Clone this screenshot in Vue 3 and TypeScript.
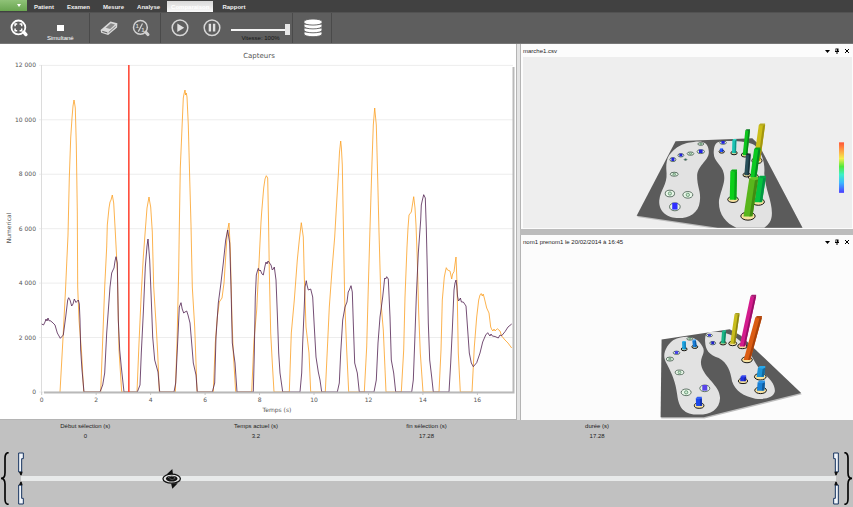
<script setup lang="ts">
import { computed, ref } from 'vue'

interface Bar {
  top: [number, number]
  base: [number, number]
  width: number
  color: string
  side: string
  cap: string
}
interface Marker {
  x: number
  y: number
  rx: number
  ry: number
  fill?: string
}
interface Scene {
  title: string
  tone: string
  viewBox: string
  mat: string
  feet: string[]
  markers: Marker[]
  bars: Bar[]
  legend: boolean
}

const bar = (tx: number, ty: number, bx: number, by: number, width: number, color: string, side: string, cap: string): Bar =>
  ({ top: [tx, ty], base: [bx, by], width, color, side, cap })

const body = (b: Bar) => {
  const w = b.width / 2
  return `${b.top[0] - w},${b.top[1]} ${b.top[0] + w},${b.top[1]} ${b.base[0] + w},${b.base[1]} ${b.base[0] - w},${b.base[1]}`
}
const shade = (b: Bar) => {
  const w = b.width / 2
  const inner = w / 3
  return `${b.top[0] + inner},${b.top[1]} ${b.top[0] + w},${b.top[1]} ${b.base[0] + w},${b.base[1] - 2} ${b.base[0] + inner},${b.base[1]}`
}
const lid = (b: Bar) => {
  const w = b.width / 2
  const h = b.width / 4
  const [x, y] = b.top
  return `${x - w},${y} ${x - w / 2},${y - h} ${x + w},${y - h} ${x + w},${y} ${x + w / 3},${y + h / 2}`
}

const scenes: Scene[] = [
  {
    title: 'marche1.csv',
    tone: 'grey',
    viewBox: '-324 -159 990 513',
    mat: '135,94 366,85 384,102 517,354 262,354 18,318',
    feet: [
      'M190 96C215 92 233 97 235 123C238 150 204 163 200 195C199 230 213 245 208 275C205 310 175 325 145 325C110 325 84 305 86 272C90 238 110 225 108 190C105 150 110 135 140 112C160 100 175 97 190 96Z',
      'M262 97C275 91 350 90 372 105C395 125 405 160 402 190C405 240 425 270 425 310C425 335 415 345 402 354H318C285 340 262 310 266 270C275 230 286 215 280 190C275 165 250 155 250 130C250 115 252 103 262 97Z',
    ],
    markers: [
      { x: 211, y: 102, rx: 9, ry: 4 },
      { x: 180, y: 131, rx: 10, ry: 5 },
      { x: 165, y: 149, rx: 4, ry: 2, fill: '#276b68' },
      { x: 127, y: 149, rx: 9, ry: 6, fill: '#2222dd' },
      { x: 151, y: 136, rx: 9, ry: 5, fill: '#2222dd' },
      { x: 211, y: 125, rx: 11, ry: 6, fill: '#2222dd' },
      { x: 131, y: 193, rx: 12, ry: 6 },
      { x: 118, y: 251, rx: 14, ry: 10 },
      { x: 172, y: 255, rx: 15, ry: 10 },
      { x: 133, y: 291, rx: 16, ry: 12, fill: '#2f2fff' },
      { x: 278, y: 98, rx: 10, ry: 5, fill: '#2222dd' },
    ],
    bars: [
      bar(273, 117, 274, 126, 10, '#1f4cff', '#1433b5', '#3d6cff'),
      bar(312, 90, 311, 130, 12, '#1cc4b4', '#129486', '#35dcca'),
      bar(352, 61, 344, 136, 14, '#0dc51d', '#08831a', '#0a7d20'),
      bar(395, 45, 380, 153, 19, '#cbbd18', '#a2950f', '#b7ab22'),
      bar(381, 117, 369, 202, 19, '#0cc922', '#068b21', '#09a21d'),
      bar(354, 134, 349, 196, 14, '#29505a', '#17323a', '#1c2e33'),
      bar(310, 184, 308, 270, 20, '#0bcf1b', '#0aa01a', '#0aae18'),
      bar(395, 203, 384, 277, 23, '#05c33e', '#029444', '#03a843'),
      bar(370, 208, 353, 320, 27, '#58b61c', '#418c12', '#67c62a'),
    ],
    legend: true,
  },
  {
    title: 'nom1 prenom1 le 20/02/2014 à 16:45',
    tone: 'white',
    viewBox: '-354 -96 990 504',
    mat: '63,174 268,143 301,162 483,335 190,408 60,408',
    feet: [
      'M120 168C150 160 175 172 186 195C198 215 178 225 182 250C190 290 238 310 239 350C238 385 210 400 175 400C130 400 115 380 110 340C105 300 95 280 80 250C68 230 68 215 80 195C92 177 105 171 120 168Z',
      'M205 152C235 148 280 152 310 190C335 220 340 240 360 265C385 290 405 305 404 330C400 350 375 355 345 352C310 345 285 330 275 300C270 270 262 245 235 230C205 220 195 205 194 180C193 165 196 155 205 152Z',
    ],
    markers: [
      { x: 148, y: 172, rx: 9, ry: 4 },
      { x: 88, y: 233, rx: 11, ry: 6 },
      { x: 117, y: 273, rx: 13, ry: 7 },
      { x: 137, y: 333, rx: 15, ry: 10 },
      { x: 193, y: 321, rx: 15, ry: 10, fill: '#5a45e8' },
      { x: 108, y: 214, rx: 10, ry: 5, fill: '#4540e8' },
      { x: 207, y: 162, rx: 9, ry: 4, fill: '#3838dc' },
      { x: 217, y: 185, rx: 9, ry: 5, fill: '#2020c8' },
    ],
    bars: [
      bar(130, 181, 131, 204, 11, '#1aa3e0', '#1277ad', '#2cb4ee'),
      bar(161, 177, 163, 197, 11, '#177cd6', '#105aa0', '#2a90e8'),
      bar(251, 149, 248, 186, 12, '#18b586', '#0f8562', '#22c898'),
      bar(290, 98, 277, 187, 15, '#c8bd1d', '#8c8413', '#a89f1c'),
      bar(339, 44, 306, 195, 17, '#d31b8c', '#980f66', '#a51c72'),
      bar(355, 108, 320, 236, 20, '#db5c12', '#a8410a', '#b54a10'),
      bar(364, 259, 360, 287, 22, '#1c93d6', '#136a9e', '#2ba7e8'),
      bar(363, 303, 361, 328, 22, '#197fd4', '#115a9b', '#2b93e6'),
      bar(309, 286, 308, 300, 17, '#2030e0', '#1520a8', '#3748ee'),
      bar(175, 351, 176, 374, 18, '#1d48e8', '#1432ad', '#2f5cf5'),
    ],
    legend: false,
  },
]

const rightFoot = '60,392 63,338 65.5,290 68,235 69.3,178 70.7,138 72,118 73,106 74,100 74.7,104 75.3,108 76.3,145 77.3,212 77.7,287 79,320 81.6,353 83.7,392 ' +
  '100.7,392 102.7,340 104.7,287 106.7,247 107.3,225 109,208 110,202 111,200 112.3,195 113.7,203 115.3,232 117.3,270 119,350 121.7,392 ' +
  '137,392 139,343 141.3,293 143.3,257 145.7,225 147,208 149,197 149.6,201 150.7,207 152.3,232 153.7,287 156,323 157.7,353 159.3,392 ' +
  '175.3,392 177,343 178.7,270 179.3,228 180.3,168 182,128 183.3,98 184,94 185,90 185.6,95 186.3,93 187,97 188.3,125 189.7,178 191,225 192.3,287 194.7,327 196,363 197,392 ' +
  '213.3,392 215.3,343 217.3,317 219.3,302 222,298 224,283 225.7,257 227.3,232 229,223 230.3,250 232,320 233.3,353 235.7,392 ' +
  '251.7,392 254,340 256.7,310 259,263 261,222 261.7,212 263.7,188 265,179 266.3,175.7 267.7,178 268.6,225 269.3,270 270.7,333 272.3,363 274,392 ' +
  '289.3,392 291.3,333 294.3,300 297.3,260 299.3,240 301.3,222.7 303.3,237 304.3,277 306,327 309,353 310.7,392 ' +
  '325.3,392 327.3,350 329.3,307 332,270 334.7,237 336.7,202 338.3,175 339.5,152 340.7,141 341.4,148 342.3,165 343.3,222 344.7,300 346.7,350 348.7,392 ' +
  '364.3,392 366.7,347 368.3,287 370.3,218 372,162 373.3,125 374.7,108 376.3,125 377.7,178 379,232 381,303 383.3,330 386,392 ' +
  '401.3,392 403.7,350 405,297 407,247 408,228 409,215 411.3,212 413.7,196.7 415,208 416,225 417.3,260 418.7,313 420.3,353 423,392 ' +
  '439,392 441,350 442.3,300 444.3,277 445.5,271 446.3,267.7 447.5,270 450,271 451.7,279 452.6,274 454,271.7 455,264 456,257 457,283 458.3,353 460.3,392 ' +
  '472,392 474.3,347 476.7,317 478.7,300 480,295 481.2,293.5 482.3,296 483.2,294 484.3,298 486.7,308 489,313 490.7,327 492,330 493,331 494,329 495,331 497.3,328.7 500,331 501.7,336 505,340 508,343 511.7,348'

const leftFoot = '41.7,324 43.5,325 45,322 46,319 47,321 48,318 49.2,321 50,320.5 52,322 55,325 57.3,333 60.3,338.3 61.5,337 63.3,335 65.7,317 67.7,300 68.7,297.7 70,300 71.7,306 73,304 74.3,299 76,302.5 77.3,301 78.3,300 79.3,304 80,320 80.7,350 82,370 84,392 ' +
  '100,392 102.7,385 104.7,373 106.7,333 110,287 111.7,273 113,270 114,268 115,261 116,256.7 117.3,263 118.3,320 119.7,350 121.3,367 122.7,380 124,392 ' +
  '137.3,392 140,385 141.3,353 143.3,313 145.3,267 147,246 148,239 149.7,260 151.3,300 152.7,337 154.7,360 158,372 159.7,392 ' +
  '174,392 175.7,383 177.3,350 179.3,307 181,302.7 182.2,309 183.7,313 185,312 186.7,311 188,315 190,323 192,347 193.3,363 196,375 197.3,392 ' +
  '212.3,392 214.7,383 216,337 218.3,303 220.7,285 223.3,263 225.7,240 227.7,230 228.6,236 229.7,243 231,287 232.3,343 235,363 237,392 ' +
  '253.3,392 254.3,353 255.3,297 256.3,275 257.4,271 258.3,268.3 259.3,271 260.3,270 262,274 263.3,275 265,266 266,262 267,264 268,261 269.5,263 271,265 272.3,270 273.3,269 274.3,267 276,280 277.3,313 278.7,353 280,373 282.7,392 ' +
  '300,392 301.7,373 302.7,343 304,313 305,287 306.3,280.7 307,285 308.3,290 310.7,289 312.7,297 314.3,327 316,357 318.3,372 320,380 321.7,392 ' +
  '337.3,392 339.3,383 340.7,353 342.7,320 345,307 347,302 348.2,292 349.3,290 351,285.7 352.3,292 353.3,323 354.7,363 357.3,373 359.3,392 ' +
  '374,392 376.3,380 378,343 380,317 382.7,297 384.7,278 385.7,279 386.7,276.7 388.3,279 390,317 391.3,360 393.7,373 395.7,392 ' +
  '411.7,392 413.3,380 414.7,343 416.3,297 418.3,253 420.7,220 421.3,205 422.4,200 423.7,194.7 425.3,198 426.3,228 427.3,270 428.3,323 429.7,360 431.7,377 433.3,392 ' +
  '449,392 450.7,363 452.3,330 454,290 455,283 456,280 456.8,286 457.5,296 458.5,301 459.3,300 460.4,298 461.4,302 463.3,302 466,306 467.7,330 469.3,353 471.3,363 473.3,366.7 476.7,362.7 480,353 482.7,342 485.7,335 487.7,332.7 489.2,335 490,336 491,334 492.3,336 495,336.5 498.3,338 500,335 501.7,335.7 505,331.7 508,327 511.7,324'

const xTicks = [0, 2, 4, 6, 8, 10, 12, 14, 16]
const yTicks = [0, 2000, 4000, 6000, 8000, 10000, 12000]
const px = (t: number) => 41.7 + t * 27.23
const py = (v: number) => 392 - v * 0.02722
const formatTick = (v: number) => String(v).replace(/(\d)(\d{3})$/, '$1 $2')

const menu = ['Patient', 'Examen', 'Mesure', 'Analyse', 'Comparaison', 'Rapport']
const active = ref('Comparaison')
const simultaneous = ref(false)
const speed = ref(100)
const start = 0
const end = 17.28
const current = ref(3.2)
const progress = computed(() => `${((current.value - start) / (end - start)) * 100}%`)
const readouts = computed(() => [
  { label: 'Début sélection (s)', value: start },
  { label: 'Temps actuel (s)', value: current.value },
  { label: 'fin sélection (s)', value: end },
  { label: 'durée (s)', value: end - start },
])
</script>

<template>
  <div class="app">
    <nav class="menu">
      <button class="file" aria-label="Fichier">
        <svg viewBox="0 0 6 4"><path d="M1 0H5L3 3Z" fill="#fff" /></svg>
      </button>
      <button v-for="m in menu" :key="m" class="item" :class="{ active: m === active }" @click="active = m">{{ m }}</button>
    </nav>

    <div class="toolbar">
      <div class="group zoom-group">
        <button class="tool" aria-label="Ajuster">
          <svg viewBox="0 0 60 60" fill="none" stroke="#fff">
            <circle cx="28" cy="28" r="23" stroke-width="6" />
            <path d="M46 44L53 52" stroke-width="11" stroke-linecap="round" />
            <path d="M17 24V17H24M32 17H39V24M39 32V39H32M24 39H17V32" stroke-width="5" />
          </svg>
        </button>
        <label class="check"><input v-model="simultaneous" type="checkbox" />Simultané</label>
      </div>
      <div class="group edit-group">
        <button class="tool" aria-label="Effacer">
          <svg viewBox="0 0 60 60">
            <path d="M2 37L35 8L58 14L57 28L27 53L4 46Z" fill="#dadada" />
            <path d="M19 29L36 14L50 18L34 33Z" fill="#8a8a8a" />
            <path d="M7 39L24 44L25 48L8 43Z" fill="#666" />
            <path d="M29 43L53 22L52 26L29 47Z" fill="#777" />
          </svg>
        </button>
        <button class="tool" aria-label="Zoom 1/1">
          <svg viewBox="0 0 60 60" fill="none" stroke="#d2d2d2">
            <circle cx="28" cy="28" r="23" stroke-width="5" />
            <path d="M46 44L53 52" stroke-width="10" stroke-linecap="round" />
            <path d="M21 42L35 15" stroke-width="4" />
            <text x="12" y="30" class="ratio">1</text>
            <text x="31" y="43" class="ratio">1</text>
          </svg>
        </button>
      </div>
      <div class="group play-group">
        <button class="tool" aria-label="Lecture">
          <svg viewBox="0 0 60 60"><circle cx="30" cy="29" r="26" fill="none" stroke="#d6d6d6" stroke-width="5" /><path d="M21 15L44 29L21 43Z" fill="#e0e0e0" /></svg>
        </button>
        <button class="tool" aria-label="Pause">
          <svg viewBox="0 0 60 60"><circle cx="30" cy="29" r="26" fill="none" stroke="#d6d6d6" stroke-width="5" /><path d="M19 16H27V42H19ZM33 16H41V42H33Z" fill="#e0e0e0" /></svg>
        </button>
        <label class="speed"><input v-model.number="speed" type="range" min="0" max="100" />Vitesse: {{ speed }}%</label>
      </div>
      <div class="group data-group">
        <button class="tool" aria-label="Données">
          <svg viewBox="0 0 60 60" fill="#fff" stroke="#5e5e5e" stroke-width="3">
            <path d="M0 43V50C0 62 60 62 60 50V43Z" />
            <path d="M0 30V37C0 49 60 49 60 37V30Z" />
            <path d="M0 17V24C0 36 60 36 60 24V17Z" />
            <path d="M0 9V12C0 23 60 23 60 12V9C60 -3 0 -3 0 9Z" />
          </svg>
        </button>
      </div>
    </div>

    <main class="workspace">
      <section class="chart">
        <svg viewBox="0 44 516 375" role="img" aria-label="Capteurs">
          <text x="259" y="58" class="title">Capteurs</text>
          <g v-for="v in yTicks" :key="v">
            <line x1="39" :y1="py(v)" x2="513" :y2="py(v)" stroke="#ededed" />
            <text x="36" :y="py(v) + 2" class="tick end">{{ formatTick(v) }}</text>
          </g>
          <g v-for="t in xTicks" :key="t">
            <line :x1="px(t)" y1="392" :x2="px(t)" y2="395" stroke="#c8c8c8" />
            <text :x="px(t)" y="402" class="tick">{{ t }}</text>
          </g>
          <line x1="41.5" y1="65" x2="41.5" y2="392" stroke="#dcdcdc" />
          <polyline :points="rightFoot" fill="none" stroke="#fb9f22" stroke-width="0.8" />
          <polyline :points="leftFoot" fill="none" stroke="#512151" stroke-width="0.8" />
          <path d="M44 392.5H513.5V67" fill="none" stroke="#b9b9b9" stroke-width="2" />
          <line :x1="px(current)" y1="65" :x2="px(current)" y2="392" stroke="#ff4b38" stroke-width="1.6" />
          <text x="277" y="412" class="tick">Temps (s)</text>
          <text transform="translate(11 228) rotate(-90)" class="tick">Numerical</text>
        </svg>
      </section>

      <div class="views">
        <section v-for="s in scenes" :key="s.title" class="view">
          <header>
            <span>{{ s.title }}</span>
            <button aria-label="Menu"><svg viewBox="0 0 6 6"><path d="M1 2H6L3.5 5Z" /></svg></button>
            <button aria-label="Épingler"><svg viewBox="0 0 6 6"><path d="M1.5 0.5H4.5V3H5V4H3.5V6H2.5V4H1V3H1.5ZM2.3 1.2V3H3V1.2Z" /></svg></button>
            <button aria-label="Fermer"><svg viewBox="0 0 6 6"><path d="M1 1L5 5M5 1L1 5" stroke="#000" /></svg></button>
          </header>
          <svg class="scene" :class="s.tone" :viewBox="s.viewBox" role="img" :aria-label="s.title">
            <defs v-if="s.legend">
              <linearGradient id="heat" x1="0" y1="0" x2="0" y2="1">
                <stop offset="0" stop-color="#ff5436" />
                <stop offset="0.15" stop-color="#ff9a42" />
                <stop offset="0.32" stop-color="#f4ee4c" />
                <stop offset="0.48" stop-color="#4fe83c" />
                <stop offset="0.64" stop-color="#3cf0c8" />
                <stop offset="0.8" stop-color="#3cb8ff" />
                <stop offset="1" stop-color="#4a3cff" />
              </linearGradient>
            </defs>
            <polygon :points="s.mat" fill="#bdbdbd" transform="translate(2 4)" />
            <polygon :points="s.mat" fill="#5b5b5b" />
            <path v-for="f in s.feet" :key="f" :d="f" fill="#e2e2e2" />
            <g v-for="m in s.markers" :key="`${m.x}-${m.y}`">
              <ellipse :cx="m.x" :cy="m.y" :rx="m.rx" :ry="m.ry" fill="#e9f7e9" stroke="#1e3a28" stroke-width="2" />
              <ellipse v-if="!m.fill" :cx="m.x" :cy="m.y" :rx="m.rx / 3" :ry="m.ry / 2" fill="#cfe8d2" stroke="#3f7a50" stroke-width="2" />
              <rect v-else :x="m.x - m.rx / 2" :y="m.y - m.ry" :width="m.rx" :height="m.ry * 1.7" :fill="m.fill" />
            </g>
            <template v-for="b in s.bars" :key="b.color">
              <ellipse :cx="b.base[0]" :cy="b.base[1] - 1" :rx="b.width * 0.8" :ry="b.width * 0.45" fill="#f7e2a0" stroke="#141414" stroke-width="3" />
              <polygon :points="body(b)" :fill="b.color" />
              <polygon :points="shade(b)" :fill="b.side" />
              <polygon :points="lid(b)" :fill="b.cap" />
            </template>
            <rect v-if="s.legend" x="627" y="97" width="15" height="152" fill="url(#heat)" />
          </svg>
        </section>
      </div>
    </main>

    <footer class="timeline">
      <dl class="readouts">
        <div v-for="r in readouts" :key="r.label"><dt>{{ r.label }}</dt><dd>{{ r.value }}</dd></div>
      </dl>
      <div class="range">
        <svg class="brace" viewBox="0 0 30 159"><path d="M26 2C17 2 15 7 15 18V62C15 73 11 79 3 79C11 79 15 85 15 96V140C15 152 17 157 26 157" /></svg>
        <svg class="grip" viewBox="0 0 18 159"><g id="half"><path d="M2 3H16V20H11V60H2Z" /><path class="tip" d="M3 59H14L11 70H7Z" /></g><use href="#half" transform="matrix(1 0 0 -1 0 159)" /></svg>
        <div class="track">
          <svg class="cursor" :style="{ left: progress }" viewBox="0 0 60 62">
            <path d="M13 17L31 0L33 17ZM27 44L31 61L48 44Z" fill="#111" />
            <ellipse cx="29" cy="30" rx="27" ry="14" fill="#e4e4e4" stroke="#111" stroke-width="4" />
            <ellipse cx="29" cy="30" rx="18" ry="9" fill="#111" />
            <path d="M18 27C24 21 34 21 40 27" fill="none" stroke="#999" stroke-width="2" />
            <path d="M22 30L31 33L40 29" fill="none" stroke="#777" stroke-width="2" />
          </svg>
          <input v-model.number="current" type="range" :min="start" :max="end" step="0.01" aria-label="Temps actuel" />
        </div>
        <svg class="grip flip" viewBox="0 0 18 159"><use href="#half" /><use href="#half" transform="matrix(1 0 0 -1 0 159)" /></svg>
        <svg class="brace flip" viewBox="0 0 30 159"><path d="M26 2C17 2 15 7 15 18V62C15 73 11 79 3 79C11 79 15 85 15 96V140C15 152 17 157 26 157" /></svg>
      </div>
    </footer>
  </div>
</template>

<style>
body {
  background: #c1c1c1;
}
</style>

<style scoped>
.app {
  display: flex;
  flex-direction: column;
  height: 100vh;
  overflow: hidden;
  font: 6px/10px "Liberation Sans", Arial, sans-serif;
  color: #1c1c1c;
}
svg {
  display: block;
}
button {
  padding: 0;
  border: 0;
  background: none;
  font: inherit;
  color: inherit;
}
.menu {
  display: flex;
  flex: none;
  height: 12px;
  gap: 1px;
  background: #414141;
}
.file {
  display: grid;
  place-items: center;
  width: 27px;
  height: 11px;
  background: linear-gradient(#8fc278, #69a550);
}
.file svg {
  width: 6px;
  height: 4px;
  margin-left: 10px;
}
.item {
  padding: 2px 6px 0;
  font-weight: bold;
  color: #f0f0f0;
}
.item.active {
  margin: 1px 2px 0 0;
  padding: 1px 4px 0;
  background: linear-gradient(#d8d8d8, #fafafa);
  color: #fff;
}
.toolbar {
  display: flex;
  flex: none;
  height: 32px;
  box-sizing: border-box;
  border-top: 1px solid #525252;
  border-bottom: 1px solid #777;
  background: #5e5e5e;
}
.group {
  display: flex;
  box-sizing: border-box;
  padding-top: 6px;
  border-right: 1px solid #4a4a4a;
}
.zoom-group {
  width: 90px;
  padding-left: 10px;
  gap: 19px;
}
.edit-group {
  width: 71px;
  padding-left: 10px;
  gap: 14px;
}
.play-group {
  width: 132px;
  padding-left: 10px;
  gap: 14px;
}
.data-group {
  width: 39px;
  padding-left: 11px;
}
.tool {
  width: 18px;
  height: 18px;
}
.tool svg {
  width: 18px;
  height: 18px;
}
.ratio {
  font: bold 20px "Liberation Sans", Arial, sans-serif;
  fill: #d2d2d2;
  stroke: none;
}
.check {
  display: flex;
  flex-direction: column;
  align-items: center;
  gap: 2px;
  padding-top: 6px;
  color: #fff;
}
.check input {
  appearance: none;
  width: 7px;
  height: 7px;
  margin: 0;
  background: #fff;
}
.check input:checked {
  border: 2px solid #fff;
  background: #333;
}
.speed {
  display: flex;
  flex-direction: column;
  align-items: center;
  width: 59px;
  margin-left: -4px;
  padding-top: 5px;
  color: #161616;
}
.speed input {
  appearance: none;
  width: 100%;
  height: 11px;
  margin: 0 0 -2px;
  background: linear-gradient(#f4f4f4, #f4f4f4) center / 100% 2px no-repeat;
}
.speed input::-webkit-slider-thumb {
  appearance: none;
  width: 5px;
  height: 11px;
  background: #e6e6e6;
}
.workspace {
  display: grid;
  grid-template-columns: 517fr 333fr;
  grid-template-rows: minmax(0, 1fr);
  flex: 1;
  min-height: 0;
  gap: 3px;
  background: #e4e4e4;
}
.chart {
  min-width: 0;
  border-right: 1px solid #b4b4b4;
  border-bottom: 1px solid #b4b4b4;
  background: #fff;
}
.chart svg {
  width: 100%;
  height: 100%;
}
.title,
.tick {
  font: 7px "DejaVu Sans", sans-serif;
  text-anchor: middle;
  fill: #555;
}
.tick {
  font-size: 6px;
}
.tick.end {
  text-anchor: end;
}
.views {
  display: grid;
  grid-template-rows: 185fr 185fr;
  gap: 6px;
  min-width: 0;
  background: #bcbcbc;
}
.view {
  display: flex;
  flex-direction: column;
  min-height: 0;
  padding: 0 1px 1px 2px;
  border-left: 1px solid #b4b4b4;
  background: #fcfcfc;
}
.view header {
  display: flex;
  flex: none;
  align-items: center;
  gap: 4px;
  height: 13px;
  padding-right: 2px;
}
.view header span {
  flex: 1;
}
.view header svg {
  width: 6px;
  height: 6px;
}
.scene {
  flex: 1;
  width: 100%;
  min-height: 0;
}
.scene.grey {
  background: #eee;
}
.scene.white {
  background: #fcfcfc;
}
.timeline {
  flex: none;
  box-sizing: border-box;
  height: 87px;
  padding-top: 1px;
  background: #c1c1c1;
}
.readouts {
  display: grid;
  grid-template-columns: repeat(5, 1fr);
  margin: 0 0 11px;
  text-align: center;
}
.readouts dd {
  margin: 0;
}
.range {
  display: flex;
  align-items: center;
}
.brace {
  flex: none;
  width: 10px;
  height: 53px;
  margin-right: 8px;
  fill: none;
  stroke: #050505;
  stroke-width: 5;
}
.grip {
  flex: none;
  width: 6px;
  height: 53px;
  fill: #f2f6fb;
  stroke: #16335f;
  stroke-width: 3;
}
.tip {
  fill: #111;
  stroke: none;
}
.flip {
  transform: scaleX(-1);
}
.brace.flip {
  margin: 0 0 0 4px;
}
.track {
  position: relative;
  flex: 1;
  height: 5px;
  margin: 0 -3px;
  background: #e8eaea;
}
.cursor {
  position: absolute;
  top: 50%;
  width: 20px;
  height: 20px;
  transform: translate(-50%, -50%);
}
.track input {
  position: absolute;
  inset: -8px 0;
  width: 100%;
  margin: 0;
  opacity: 0;
}
</style>
